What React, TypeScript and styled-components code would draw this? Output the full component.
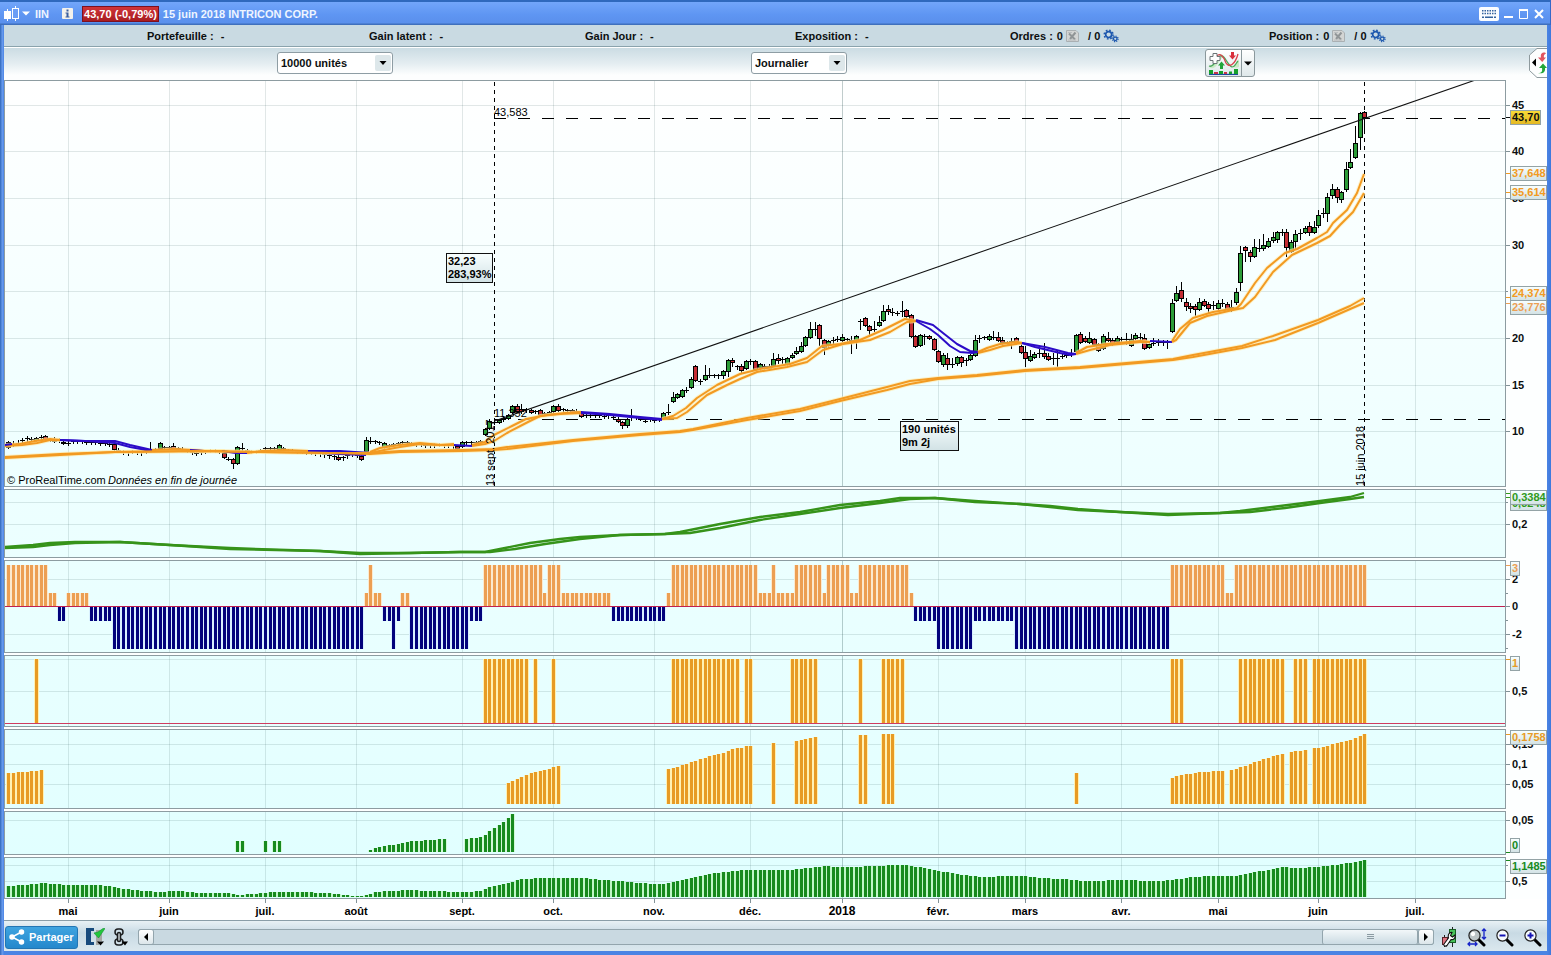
import React from "react";
import styled, { createGlobalStyle } from "styled-components";

const GlobalStyle = createGlobalStyle`
  *, *::before, *::after { box-sizing: border-box; }
  body { margin: 0; background: #4a84e4; }
  body, button, select { font: bold 11px/14px "Liberation Sans", Arial, sans-serif; color: #0c0f10; }
  svg { display: block; }
`;

/* ---------- window frame ---------- */

const Window = styled.main`
  display: flex;
  flex-direction: column;
  min-height: 100vh;
  min-width: 1100px;
  padding: 0 4px 4px;
  background: linear-gradient(to right, #3c72c4 0 1px, #6d9ff0 2px, #4a84e4 4px, #4a84e4 calc(100% - 4px), #3f78dc 100%);
`;

const TitleBar = styled.header`
  display: flex;
  align-items: center;
  height: 25px;
  flex: none;
  margin: 0 -4px;
  padding: 2px 3px 0 3px;
  color: #eef5ff;
  background: linear-gradient(#2f69bd 0 2px, #72a6fa 2px, #5e95f2 60%, #5a90ec 23px, #3f70bd 24px);
  border-right: 1px solid #3568c8;
`;

const Symbol = styled.h1`
  margin: 0 12px 0 3px;
  font-size: 11px;
  line-height: 14px;
`;

const Quote = styled.span`
  margin: 0 4px 0 9px;
  padding: 0 1px;
  line-height: 14px;
  border: 1px solid #7c1020;
  background: linear-gradient(#d03438, #a81c20);
  color: #fff;
`;

const Spacer = styled.div`
  flex: 1;
`;

const IconButton = styled.button<{ $w?: number; $h?: number }>`
  display: flex;
  align-items: center;
  justify-content: center;
  flex: none;
  width: ${(p) => p.$w ?? 16}px;
  height: ${(p) => p.$h ?? 20}px;
  padding: 0;
  border: 0;
  background: none;
  color: inherit;
`;

const StatusBar = styled.section`
  display: grid;
  grid-template-columns: 143fr 222fr 216fr 210fr 215fr 259fr 278fr;
  align-items: center;
  height: 22px;
  flex: none;
  background: #c9dae2;
  border-bottom: 1px solid #8aa3ac;
`;

const StatusItem = styled.div`
  display: flex;
  align-items: center;
  gap: 3px;
  white-space: pre;
`;

const StatusLabel = styled.span`
  margin-right: 4px;
`;

const Toolbar = styled.section`
  display: grid;
  grid-template-columns: 273fr 474fr 454fr 324fr 18px;
  align-items: center;
  height: 33px;
  flex: none;
  padding-bottom: 1px;
  background: linear-gradient(#fff 0 1px, #cbdce3 1px, #e4edf1 50%, #fdfefe 85%);
`;

const SelectBox = styled.label<{ $w: number }>`
  display: flex;
  position: relative;
  width: ${(p) => p.$w}px;
  height: 22px;

  select {
    width: 100%;
    padding: 0 22px 0 3px;
    appearance: none;
    border: 1px solid #8e9da4;
    border-radius: 3px;
    background: #fff;
  }
  svg {
    position: absolute;
    right: 2px;
    top: 3px;
    pointer-events: none;
  }
`;

const SplitButton = styled.div`
  display: flex;
  width: 50px;
  height: 28px;
  border: 1px solid #8b989c;
  border-radius: 3px;
  background: linear-gradient(#fff, #dfe8ea);
  button + button { border-left: 1px solid #8b989c; }
`;

/* ---------- charts ---------- */

const Charts = styled.section`
  display: flex;
  flex-direction: column;
  gap: 2px;
  background: #fdffff;
`;

const PanelRow = styled.div`
  display: flex;
`;

const Plot = styled.div<{ $h: number; $from: string; $to: string }>`
  display: grid;
  flex: 1;
  min-width: 0;
  height: ${(p) => p.$h}px;
  border: 1px solid #8d9ca1;
  background: linear-gradient(${(p) => p.$from}, ${(p) => p.$to});
  > svg { grid-area: 1 / 1; width: 100%; height: 100%; }
`;

const Axis = styled.svg`
  flex: none;
  overflow: visible;
  font-weight: bold;
`;

const TimeAxis = styled.div`
  display: flex;
  flex: 1 0 auto;
  height: 22px;
  padding: 0 42px 0 1px;
  background: #fff;
  border-bottom: 1px solid #8a9ea8;
  svg { width: 100%; height: 21px; overflow: visible; }
`;

/* ---------- footer ---------- */

const Footer = styled.footer`
  display: flex;
  align-items: center;
  flex: none;
  height: 30px;
  padding: 2px 2px 0 1px;
  background: linear-gradient(#e8f1f5, #c8dae4 40%, #dbe8ee);
`;

const ShareButton = styled.button`
  display: flex;
  align-items: center;
  gap: 4px;
  height: 23px;
  width: 73px;
  margin: 0 7px 0 0;
  padding: 0 2px 0 3px;
  border: 1px solid #2276b4;
  border-radius: 3px;
  background: linear-gradient(#3fa4e0, #2488cc);
  color: #fff;
`;

const ScrollBar = styled.div`
  display: flex;
  flex: 1;
  height: 16px;
  margin: 0 3px 0 1px;
  border: 1px solid #93a5ad;
  border-radius: 3px;
  background: #c9d9e1;
`;

const ScrollArrow = styled(IconButton)`
  width: 14px;
  height: 14px;
  border-radius: 2px;
  background: linear-gradient(#fff, #dce6ea);
  box-shadow: 0 0 0 1px #93a5ad;
`;

const ScrollThumb = styled.div`
  display: flex;
  align-items: center;
  justify-content: center;
  width: 94px;
  margin-right: 2px;
  border-radius: 2px;
  background: linear-gradient(#f2f7f9, #cbdbe3);
  box-shadow: 0 0 0 1px #93a5ad;
`;

const Tools = styled.div`
  display: flex;
  gap: 4px;
`;

/* ---------- data ---------- */

const GREEN = "#178a1e";
const ORANGE = "#e79b25";
const SAND = "#ec9f53";
const NAVY = "#02027c";
const MA = "#f29a22";
const BLUE = "#2c0cc8";

const PLOT_X = 5;
const PLOT_W = 1500;
const barLeft = (i: number) => Math.floor(7.95 + i * 4.58);
const pct = (x: number) => `${((x - PLOT_X) / PLOT_W) * 100}%`;

const months: [number, string][] = [
  [68, "mai"], [169, "juin"], [265, "juil."], [356, "août"], [462, "sept."], [553, "oct."], [654, "nov."], [750, "déc."],
  [842, "2018"], [938, "févr."], [1025, "mars"], [1121, "avr."], [1218, "mai"], [1318, "juin"], [1415, "juil."],
];

type Bar = { i: number; top: number; bottom: number; fill: string };

/* runs of equal score: first bar, last bar, score */
const scoreRuns = [
  [0, 8, 3], [9, 10, 1], [11, 12, -1], [13, 17, 1], [18, 22, -1], [23, 77, -3], [78, 78, 1], [79, 79, 3], [80, 81, 1], [82, 83, -1],
  [84, 84, -3], [85, 85, -1], [86, 87, 1], [88, 100, -3], [101, 103, -1], [104, 116, 3], [117, 117, 1], [118, 120, 3], [121, 131, 1],
  [132, 143, -1], [144, 144, 1], [145, 163, 3], [164, 166, 1], [167, 167, 3], [168, 171, 1], [172, 177, 3], [178, 178, 1], [179, 183, 3],
  [184, 185, 1], [186, 196, 3], [197, 197, 1], [198, 202, -1], [203, 210, -3], [211, 219, -1], [220, 253, -3], [254, 265, 3],
  [266, 267, 1], [268, 296, 3],
];
const scoreBars: Bar[] = scoreRuns.flatMap(([a, b, v]) =>
  Array.from({ length: b - a + 1 }, (_, k) =>
    v > 0 ? { i: a + k, top: 607 - v * 14, bottom: 606, fill: SAND } : { i: a + k, top: 607, bottom: 607 - v * 14, fill: NAVY }
  )
);

const signalRuns = [
  [6, 6], [104, 113], [115, 115], [119, 119], [145, 159], [161, 162], [171, 176], [186, 186], [191, 195], [254, 256], [269, 278],
  [281, 283], [285, 296],
];
const signalBars: Bar[] = signalRuns.flatMap(([a, b]) =>
  Array.from({ length: b - a + 1 }, (_, k) => ({ i: a + k, top: 659, bottom: 723, fill: ORANGE }))
);

const series = (start: number, tops: number[], bottom: number, fill: string): Bar[] =>
  tops.map((top, k) => ({ i: start + k, top, bottom, fill }));

const slopeBars: Bar[] = [
  ...series(0, [773, 773, 772, 772, 772, 771, 771, 770], 804, ORANGE),
  ...series(109, [783, 781, 779, 777, 775, 773, 772, 771, 770, 769, 767, 766], 804, ORANGE),
  ...series(144, [769, 768, 767, 765, 764, 762, 761, 759, 758, 756, 755, 754, 753, 751, 749, 748, 748, 746, 746], 804, ORANGE),
  ...series(167, [743], 804, ORANGE),
  ...series(172, [741, 740, 739, 738, 737], 804, ORANGE),
  ...series(186, [735, 735], 804, ORANGE),
  ...series(191, [734, 734, 734], 804, ORANGE),
  ...series(233, [773], 804, ORANGE),
  ...series(254, [778, 776, 775, 774, 774, 773, 772, 772, 772, 771, 771, 771], 804, ORANGE),
  ...series(267, [770, 769, 767, 766, 764, 762, 761, 759, 758, 756, 755, 754], 804, ORANGE),
  ...series(280, [752, 751, 751, 750], 804, ORANGE),
  ...series(285, [748, 748, 747, 746, 744, 743, 742, 741, 740, 738, 736, 734], 804, ORANGE),
];

const baseBars: Bar[] = [
  ...series(50, [841, 841], 852, GREEN),
  ...series(56, [841], 852, GREEN),
  ...series(58, [841, 841], 852, GREEN),
  ...series(79, [850, 848, 847, 846, 845, 845, 844, 843, 842, 841, 841, 841, 840, 840, 840, 839, 839], 852, GREEN),
  ...series(100, [839, 838, 838, 837, 835, 831, 828, 825, 822, 818, 814], 852, GREEN),
];

/* slow oscillator: bar index, top of the bar; tops between are interpolated */
const volKeys = [
  [0, 886], [3, 885], [5, 884], [8, 883], [10, 884], [13, 885], [19, 885], [22, 886], [24, 888], [27, 890], [30, 891], [33, 892],
  [36, 891], [38, 891], [42, 893], [48, 893], [50, 895], [53, 894], [58, 892], [64, 892], [70, 893], [74, 895], [76, 896], [78, 895],
  [80, 892], [83, 891], [88, 890], [92, 891], [100, 892], [103, 891], [105, 887], [109, 883], [112, 879], [116, 878], [126, 878],
  [130, 880], [134, 881], [137, 883], [142, 884], [144, 883], [148, 879], [154, 873], [160, 870], [170, 870], [175, 868], [178, 866],
  [182, 867], [190, 866], [193, 865], [196, 865], [201, 869], [207, 874], [212, 877], [218, 876], [222, 876], [226, 878], [233, 880],
  [235, 881], [243, 880], [250, 881], [254, 880], [258, 877], [262, 876], [268, 876], [272, 872], [276, 869], [278, 867], [281, 868],
  [285, 867], [290, 865], [296, 860],
];
const volBars: Bar[] = Array.from({ length: 297 }, (_, i) => {
  const k = Math.max(1, volKeys.findIndex(([n]) => n >= i));
  const [x0, y0] = volKeys[k - 1];
  const [x1, y1] = volKeys[k];
  return { i, top: Math.round(y0 + ((y1 - y0) * (i - x0)) / (x1 - x0)), bottom: 897, fill: GREEN };
});

/* candles: first bar of the run, then "body top, body bottom, high, low, colour" for each bar */
const candleRuns: [number, string][] = [
  [0, "442 447 441 448 g|444 445 441 446 k|443 444 440 445 k|440 441 438 443 k|438 439 436 441 k|439 440 437 440 k|438 440 437 441 g|437 438 435 440 k|436 439 435 440 r|439 440 438 441 k|439 441 437 442 r|440 441 438 442 k|442 443 441 444 g|443 444 441 445 k|441 442 440 443 k|441 442 440 443 k|441 442 440 443 k|442 443 441 444 k|442 443 440 444 k|442 443 441 444 k|443 444 441 445 k|443 444 442 445 k|444 445 442 446 k"],
  [23, "444 449 443 450 r|450 451 448 452 k|452 453 450 454 k|452 453 451 455 k|451 452 450 453 k|452 453 451 454 k|452 453 451 455 k|450 451 449 453 k|449 450 442 451 k|449 450 448 451 k|443 448 442 449 g|447 448 446 449 k|447 448 446 449 k|446 448 443 449 r|448 449 447 450 k|449 450 447 451 k|450 451 449 452 k|452 453 450 454 k|453 454 451 455 k|452 453 450 454 k|451 452 450 453 k|450 451 449 452 k|450 451 449 452 k|451 452 450 453 k|453 457 452 458 r|459 460 457 460 k|459 463 458 468 r|447 463 446 464 g|448 449 443 450 k|450 451 449 452 k|451 452 450 453 k|451 452 450 453 k|450 451 449 452 k|448 449 447 450 k|448 449 447 450 k|448 449 447 450 k|445 449 444 450 g|448 449 447 450 k"],
  [61, "450 451 449 452 k|450 451 449 452 k|451 452 450 453 k|451 452 450 453 k|452 453 450 454 k|452 453 450 454 k|452 453 451 455 k|453 454 451 456 k|454 455 453 457 k|455 456 454 458 k|456 458 455 459 k|457 459 455 460 r|457 458 456 460 k|455 456 454 458 k|453 454 452 456 k|455 456 454 457 k|456 459 455 460 r|440 451 437 452 g|441 442 437 443 k|441 442 440 443 k|442 443 441 444 k|443 447 442 448 g|445 446 444 447 k|444 445 443 446 k|443 444 442 445 k|442 443 441 444 k|442 443 441 444 k|443 444 442 445 k|444 445 443 446 k|444 445 443 446 k|445 446 444 447 k|445 446 443 447 k|445 446 443 447 k|444 445 443 446 k|445 446 444 447 k|445 446 444 447 k|445 446 444 448 k|446 448 445 449 r|442 446 441 447 g|442 443 441 445 k|442 443 441 444 k|442 443 441 444 k|441 442 440 443 k"],
  [104, "429 434 428 435 g|421 428 419 429 g|422 423 420 424 k|420 422 419 423 g|418 420 416 421 k|415 418 414 419 g|406 412 405 413 g|406 411 404 412 r|409 411 404 413 r|409 411 408 412 k|410 412 409 413 r|411 412 410 413 k|410 414 409 415 r|413 414 412 415 k|412 414 411 415 g|406 411 405 412 g|406 410 404 411 r|409 410 408 412 k|410 411 409 412 k|410 412 409 413 r|411 412 409 413 k|412 416 411 417 r|415 416 413 417 k|415 416 413 417 k|415 416 414 417 k|415 416 414 417 k|416 417 415 418 k|415 416 413 418 k|417 418 416 419 k|419 421 417 422 r|422 425 421 428 r|419 425 418 427 g|417 418 409 420 k|417 418 416 419 k|418 419 417 420 k|421 422 420 422 k|419 420 417 421 k|420 421 418 422 k|419 420 418 421 k|413 417 412 418 g|412 413 404 414 k|397 401 392 402 g|394 397 393 398 g|390 396 389 397 g|390 391 387 392 k|379 387 377 388 g|366 380 365 381 r|381 382 379 384 k|375 379 365 380 g|375 376 368 377 k|375 376 374 377 k|375 376 374 378 k|371 375 370 378 g|360 371 359 376 g|360 362 358 366 r|366 367 365 369 k|366 370 364 373 r|361 368 360 369 g"],
  [162, "361 362 359 364 k|361 369 360 370 r|364 367 363 370 g|366 368 364 369 r|366 368 364 369 g|359 365 353 366 g|358 360 354 363 r|359 360 357 363 k|358 364 357 365 g|355 357 353 358 g|351 353 347 354 g|346 351 342 352 g|337 345 336 346 g|329 337 322 338 g|329 330 322 335 k|325 338 324 345 r|340 347 339 354 r|341 344 340 348 g|340 341 337 343 k|339 340 336 341 k|337 340 334 341 g|339 340 338 341 k|340 341 336 353 k|336 341 335 348 g|321 322 319 329 k|318 325 317 326 r|326 330 325 336 r|329 330 321 331 k|322 325 316 326 g|311 320 305 321 g|309 311 305 314 r|312 313 308 315 k|313 314 311 315 k|311 312 301 316 k|310 316 309 317 r|315 336 314 337 r|336 346 335 347 r|335 345 334 346 g|336 337 334 344 k|336 338 335 339 r|339 349 338 350 r|351 361 350 362 r|355 364 353 366 g|358 364 353 369 r|364 365 358 367 k|357 363 356 365 g|357 362 356 366 r|360 361 358 365 k|355 359 354 360 g|340 355 335 356 g|338 339 335 342 k|337 338 336 339 k|336 339 334 340 g|337 338 331 339 k|337 340 332 341 r|340 342 337 345 r|342 343 341 345 k|341 342 338 348 k|338 343 337 344 r|346 352 344 353 r|352 358 346 366 r|356 360 350 361 g|354 357 352 358 g|353 354 349 357 k|353 356 343 358 r|356 359 353 360 r|358 359 353 364 k|358 359 350 366 k"],
  [230, "356 357 354 358 k|355 356 353 357 k|354 355 349 356 k|335 351 334 352 g|334 342 332 343 r|338 341 336 342 r|338 342 332 343 g|339 344 338 345 r|344 350 343 351 r|336 348 334 349 g|338 340 332 341 r|340 344 338 345 r|338 341 336 342 g|339 340 337 341 k|339 340 333 344 k|339 345 334 346 g|335 338 333 339 g|337 338 333 340 k|338 348 334 349 r|344 347 341 348 g|343 344 338 345 k|342 343 339 345 k|342 343 340 345 k|342 343 340 348 k|303 331 299 332 g|293 300 286 301 g|290 298 282 301 r|302 306 298 310 r|306 308 303 312 r|306 309 304 315 r|302 309 298 310 g|301 305 299 306 r|304 308 302 313 r|305 306 301 309 k|303 308 300 309 g|303 304 299 306 k|304 309 302 311 r|307 308 300 311 k|292 302 288 304 g|253 282 246 290 g|247 250 246 261 r|252 256 250 261 r|247 256 239 257 g|248 249 239 251 k|245 248 234 250 g|241 246 238 247 g|237 240 232 242 g|232 239 231 242 g|232 233 229 235 k|232 247 229 256 r|242 251 240 252 g|234 241 230 248 g|233 234 229 239 k|228 232 226 233 g|226 232 222 235 r|227 232 221 233 g|215 225 210 227 g|213 214 208 217 k|197 213 193 221 g|189 195 184 198 g|189 197 187 202 r|192 199 191 202 g|169 189 162 191 g|162 167 149 168 g|143 157 126 158 g|113 137 112 149 g|112 117 111 133 r"],
];
const candles = candleRuns.flatMap(([start, text]) =>
  text.split("|").map((c, k) => {
    const [top, bottom, high, low, kind] = c.split(" ");
    return { i: start + k, top: +top, bottom: +bottom, high: +high, low: +low, kind };
  })
);
const candleFill: Record<string, string> = { g: "#2c9c38", r: "#c42c34", k: "#000" };

const averages: [string, string][] = [
  [MA, "5,445 20,444 35,441 50,439 60,440"],
  [MA, "5,446 22,445 37,443 50,440 60,440"],
  [BLUE, "5,445 12,444"],
  [BLUE, "60,440 85,441 115,441 130,445 152,450"],
  [BLUE, "60,440 85,441 115,443 130,447 152,451"],
  [MA, "152,450 175,449 192,450 205,451 225,451"],
  [BLUE, "190,450 204,451"],
  [BLUE, "222,451 236,453 247,453"],
  [MA, "247,453 262,451 285,450 308,451"],
  [BLUE, "308,451 340,451 370,453"],
  [BLUE, "308,452 340,454 366,455"],
  [MA, "370,452 380,448 400,445 420,443 440,445 454,444"],
  [MA, "370,453 384,450 400,447 420,444 440,445 454,445"],
  [BLUE, "454,445 472,446"],
  [MA, "472,445 485,442 494,435 512,426 526,419 547,415 565,413 581,412"],
  [MA, "472,446 485,444 494,441 507,433 528,422 540,416 560,414 581,413"],
  [BLUE, "581,412 610,414 640,417 662,419"],
  [BLUE, "581,413 610,415 640,418 662,420"],
  [MA, "662,419 673,416 686,408 697,398 717,385 740,374 760,369 790,364 807,358 822,346 840,344 860,340 883,330 905,319 916,321"],
  [MA, "662,419 677,418 687,412 707,395 727,385 740,379 757,372 787,367 807,362 823,350 843,344 870,340 890,332 907,322 916,321"],
  [BLUE, "916,320 933,325 943,333 957,344 970,351 978,352"],
  [BLUE, "916,321 930,329 938,335 950,346 960,352 972,353 978,352"],
  [MA, "978,352 987,348 1000,344 1017,342 1022,343"],
  [MA, "978,353 990,350 1003,346 1022,343"],
  [BLUE, "1022,343 1035,347 1060,353 1070,355 1076,354"],
  [BLUE, "1022,343 1045,347 1068,353 1076,354"],
  [MA, "1076,353 1087,347 1107,344 1140,341 1150,342"],
  [MA, "1076,354 1090,350 1110,345 1140,342 1150,342"],
  [BLUE, "1150,341 1172,342"],
  [MA, "1172,341 1180,329 1193,318 1213,312 1237,308 1241,304 1255,283 1267,268 1285,253 1297,249 1317,238 1327,232 1333,223 1347,210 1357,193 1364,174"],
  [MA, "1172,342 1176,340 1190,323 1207,316 1233,310 1243,308 1255,297 1273,272 1292,255 1317,243 1330,236 1340,225 1353,212 1364,193"],
  [MA, "5,457 60,454 115,452 200,451 260,452 330,453 370,453 400,451 462,450 494,449 507,447 573,440 640,434 680,431 693,429 747,418 800,409 840,399 887,387 910,381 938,378 977,375 1025,370 1080,367 1173,359 1193,355 1242,346 1273,336 1318,320 1350,306 1364,298"],
  [MA, "5,458 60,455 115,452 200,451 260,452 330,453 370,454 400,452 462,451 494,450 507,449 573,441 640,435 680,432 693,430 747,420 800,411 840,401 887,390 910,384 938,379 977,376 1025,371 1080,368 1173,360 1193,357 1242,348 1275,340 1318,323 1364,303"],
];

const trendLines = [
  "5,547 33,545 50,543 75,542 120,542 170,545 230,548 320,551 360,554 410,553 460,552 485,552 500,549 530,543 560,539 580,537 620,535 665,534 680,532 720,524 760,517 800,512 840,505 880,501 900,498 935,498 975,502 1020,504 1050,506 1078,509 1120,512 1168,515 1220,513 1240,511 1280,506 1320,501 1350,497 1364,493",
  "5,548 33,547 50,545 75,543 120,542 170,545 230,549 320,551 360,553 410,553 460,552 490,552 515,549 545,544 580,539 620,535 665,534 690,533 720,528 760,520 800,514 840,508 880,503 910,499 935,498 975,501 1020,504 1050,507 1078,510 1120,512 1168,514 1220,513 1250,512 1285,508 1320,503 1350,499 1364,497",
];

/* ---------- chart parts ---------- */

const Bars = ({ bars, halo }: { bars: Bar[]; halo: (b: Bar) => string }) => (
  <g shapeRendering="crispEdges">
    {bars.map((b) => <rect key={`h${b.i}`} x={barLeft(b.i) - 1} y={b.top} width={5} height={b.bottom - b.top} fill={halo(b)} />)}
    {bars.map((b) => <rect key={b.i} x={barLeft(b.i)} y={b.top} width={3} height={b.bottom - b.top} fill={b.fill} />)}
  </g>
);

const ZeroLine = ({ y, color }: { y: number; color: string }) => (
  <rect x={PLOT_X} y={y} width={PLOT_W} height={1} fill={color} shapeRendering="crispEdges" />
);

type Tick = { y: number; label?: string };
type Badge = { y: number; label: string; color: string; tick?: number; gold?: boolean };

type PanelProps = {
  y: number;
  h: number;
  from: string;
  to: string;
  grid: number[];
  ticks: Tick[];
  badges: Badge[];
  children: React.ReactNode;
  overlay?: React.ReactNode;
};

const Panel = ({ y, h, from, to, grid, ticks, badges, children, overlay }: PanelProps) => (
  <PanelRow>
    <Plot $h={h} $from={from} $to={to}>
      <svg viewBox={`${PLOT_X} ${y + 1} ${PLOT_W} ${h - 2}`} preserveAspectRatio="none">
        <g shapeRendering="crispEdges" fill="#204848">
          {grid.map((g) => <rect key={g} x={PLOT_X} y={g} width={PLOT_W} height={1} fillOpacity={0.13} />)}
          {months.map(([x]) => <rect key={x} x={x} y={y} width={1} height={h} fillOpacity={x === 842 ? 0.28 : 0.13} />)}
        </g>
        {children}
      </svg>
      {overlay && <svg>{overlay}</svg>}
    </Plot>
    <Axis width={41} height={h} viewBox={`1506 ${y} 41 ${h}`}>
      {ticks.map((t) => (
        <g key={t.y}>
          <rect x={1506} y={t.y} width={t.label ? 4 : 2} height={1} fill="#829297" />
          {t.label && <text x={1512} y={t.y + 4} fill="#0c0f10">{t.label}</text>}
        </g>
      ))}
      {badges.map((b) => {
        const w = b.label.length === 1 ? 9 : b.gold ? 30 : 36;
        return (
          <g key={b.label}>
            {b.tick && <rect x={1506} y={b.tick} width={4} height={1} fill={b.color} />}
            <rect x={1510.5} y={b.y + 0.5} width={w} height={14} fill={b.gold ? "url(#gold)" : "url(#glass)"} stroke="#93a3a6" />
            <text x={1512} y={b.y + 11} fill={b.color}>{b.label}</text>
          </g>
        );
      })}
    </Axis>
  </PanelRow>
);

const Note = ({ x, y, w, lines }: { x: number; y: number; w: number; lines: string[] }) => (
  <svg x={pct(x)} y={y - 81} overflow="visible" fontWeight="bold">
    <rect x={0.5} y={0.5} width={w} height={29} fill="url(#glass)" stroke="#111" />
    {lines.map((l, k) => <text key={l} x={2} y={12 + k * 13}>{l}</text>)}
  </svg>
);

/* ---------- icons ---------- */

const Caret = ({ color = "#000" }: { color?: string }) => (
  <svg width="8" height="5" viewBox="0 0 8 5"><path d="M0 0.5h8L4 4.5z" fill={color} /></svg>
);

const CandlesIcon = () => (
  <svg width="17" height="16" viewBox="0 0 17 16">
    <path d="M4.5 3v12M12.5 0v15" stroke="#fff" />
    <rect x="1" y="5" width="7" height="8" fill="#fff" />
    <rect x="9.5" y="2.5" width="6" height="10" fill="#6a9df5" stroke="#fff" />
  </svg>
);

const InfoIcon = () => (
  <svg width="11" height="11" viewBox="0 0 11 11">
    <rect width="11" height="11" rx="1" fill="#f4f2ec" />
    <path d="M4.5 1.5h2v2h-2zM3.5 4.5h3v4h1v1h-4v-1h1v-3h-1z" fill="#3a5f9e" />
  </svg>
);

const CancelOrderIcon = () => (
  <svg width="13" height="12" viewBox="0 0 13 12">
    <path d="M.5.5h9.500l2.500 2.500v8.500H.5z" fill="#d3d5d4" stroke="#aab0b3" />
    <path d="M3 3.500l6 6M9.500 2.500L4 9" stroke="#909597" strokeWidth="2" />
    <path d="M2 2.500h4M2 10h8" stroke="#b9bdbf" />
  </svg>
);

const GearsIcon = () => (
  <svg width="17" height="14" viewBox="0 0 17 14" fill="none" stroke="#1d58ae">
    <circle cx="6" cy="5.5" r="3.2" strokeWidth="1.8" />
    <circle cx="6" cy="5.5" r="4.7" strokeWidth="1.6" strokeDasharray="1.8 1.89" />
    <circle cx="13" cy="10" r="1.9" strokeWidth="1.4" />
    <circle cx="13" cy="10" r="3" strokeWidth="1.3" strokeDasharray="1.2 1.15" />
  </svg>
);

const KeyboardIcon = () => (
  <svg width="20" height="14" viewBox="0 0 20 14">
    <rect width="20" height="14" rx="2" fill="#fbfdff" />
    <path d="M3 3.8h14M3 6.5h14" stroke="#35639e" strokeWidth="1.6" strokeDasharray="1.5 1" />
    <path d="M3 10.2h2M6 10.2h8M15 10.2h2" stroke="#35639e" strokeWidth="1.4" />
  </svg>
);

const IndicatorIcon = () => (
  <svg width="31" height="24" viewBox="0 0 31 24">
    <path d="M1 15C6 18 8 8 12 4c5-3 7 10 12 11 3 0 4-4 7-7v8c-5 2-8-1-11-5-4-6-6-5-9 0-3 5-6 8-10 5z" fill="#c9ecc4" />
    <path d="M1 15c5 2 7-7 11-10 5-2 7 9 12 11 3 0 4-4 6-6" fill="none" stroke="#4aa65a" strokeWidth="1.2" />
    <path d="M9 5c3-4 7 1 9 7 3 5 9 2 12-9" fill="none" stroke="#d8404a" strokeWidth="1.3" />
    <path d="M5 2.5h4v3h3v4H9v3H5v-3H2v-4h3z" fill="#fff" stroke="#6c7577" />
    <path d="M12 18v-3.500h-2l3.500-4 3.500 4h-2V18z" fill="#22a53a" />
    <path d="M23 1h3v3.500h2L24.500 8.500 21 4.500h2z" fill="#d92f3c" />
    <path d="M1 23.500h29" stroke="#1c4b9c" strokeWidth="1.4" />
    <path d="M1 19h4v4H1zM11 20h4v3h-4zM21 20.500h3v2.500h-3zM26 18h4v5h-4z" fill="#16a02c" />
    <path d="M6 21h4v2H6zM16 21h3v2h-3z" fill="#c8324a" />
  </svg>
);

const OrderTabIcon = () => (
  <svg width="18" height="30" viewBox="0 0 18 30">
    <path d="M18 .5H8L.5 7v15.500L8 29.500h10" fill="#fdfefe" stroke="#8e9a9e" />
    <path d="M7 10.500v8L3 14.500z" fill="#000" />
    <path d="M16 4.500c-4 0-4.500 2-4 5H9l4.200 4.500L17 9.500h-2c-.5-2 0-3 2-4z" fill="#e25560" />
    <path d="M9 25c4 0 4.500-2 4-5h-3l4-4.500 4 4.500h-2c.5 4-1.500 6-7 5z" fill="#23a63a" />
  </svg>
);

const ShareIcon = () => (
  <svg width="16" height="16" viewBox="0 0 16 16" fill="#fff" stroke="#fff" strokeWidth="1.500">
    <path d="M12.500 3L3 8l9.500 5" fill="none" />
    <circle cx="12.500" cy="3" r="2" />
    <circle cx="3" cy="8" r="2" />
    <circle cx="12.500" cy="13" r="2" />
  </svg>
);

const ValidateIcon = () => (
  <svg width="20" height="18" viewBox="0 0 20 18">
    <path d="M1 0h8v3H6v11h3v3H1z" fill="#174a7c" />
    <path d="M11 2h6v11h-3v4h-3z" fill="#a6a7a4" />
    <path d="M9 5l4-1 5-3.500h2L13.500 10z" fill="#22c83c" stroke="#169030" strokeWidth=".6" />
    <path d="M12 13.500h7l-3.500 4z" fill="#000" />
  </svg>
);

const ChainIcon = () => (
  <svg width="14" height="18" viewBox="0 0 14 18" fill="none" stroke="#1b1e20" strokeWidth="1.500">
    <rect x="1" y="1" width="8" height="6" rx="3" />
    <rect x="1" y="11" width="8" height="6" rx="3" />
    <rect x="3.500" y="4.500" width="3" height="9" rx="1.500" fill="#c7cfd2" />
    <path d="M7.500 13.500h6.500l-3 4z" fill="#000" stroke="none" />
  </svg>
);

const WrenchIcon = () => (
  <svg width="17" height="20" viewBox="0 0 17 20">
    <path d="M3.500 8v12M11.500 0v20" stroke="#222" />
    <rect x="1.500" y="10.500" width="5" height="7" fill="#dd7480" stroke="#5a2228" />
    <rect x="8.500" y="2.500" width="6" height="13" fill="#48c35a" stroke="#175c22" />
    <path d="M3 17l4.500-6C6.500 7.500 8.500 5 11 5.500L9.500 8.500l2 1.500 2.500-2c.8 3-1.500 5-4 4.500L6 18.500c-1.500 1.500-4 0-3-1.500z" fill="#fff" stroke="#111" strokeWidth="1.100" />
  </svg>
);

const ZoomIcon = ({ kind }: { kind: "in" | "out" | "fit" }) => (
  <svg width="20" height="19" viewBox="0 0 20 19">
    <path d="M11 11l6 6" stroke="#000" strokeWidth="3" strokeLinecap="round" />
    <circle cx="7.500" cy="7.500" r="5.600" fill={kind === "fit" ? "#bcc4c6" : "#f6fbfd"} stroke="#222" strokeWidth="1.200" />
    {kind === "fit" ? (
      <g fill="none" stroke="#1522c8" strokeWidth="1.300">
        <circle cx="6" cy="6" r="1.500" fill="#fff" stroke="#fff" />
        <path d="M17 1v10M15 3l2-2 2 2M15 9l2 2 2-2M1 16h9M3 14l-2 2 2 2M8 14l2 2-2 2" />
      </g>
    ) : (
      <path d={kind === "in" ? "M4.500 7.500h6M7.500 4.500v6" : "M4.500 7.500h6"} stroke="#1414b4" strokeWidth="2" />
    )}
  </svg>
);

/* ---------- page ---------- */

const Combo = ({ label, value, w }: { label: string; value: string; w: number }) => (
  <SelectBox $w={w}>
    <select aria-label={label} defaultValue={value}><option>{value}</option></select>
    <svg width="16" height="16" viewBox="0 0 16 16">
      <rect width="16" height="16" rx="2" fill="#dde7ea" />
      <path d="M4.500 6h7L8 10z" fill="#000" />
    </svg>
  </SelectBox>
);

const Status = ({ label, value }: { label: string; value: string }) => (
  <StatusItem><StatusLabel>{label} :</StatusLabel>{value}</StatusItem>
);

const OrderStatus = ({ label, cancel, settings }: { label: string; cancel: string; settings: string }) => (
  <StatusItem>
    <span><StatusLabel>{label} :</StatusLabel>0</span>
    <IconButton $w={13} aria-label={cancel}><CancelOrderIcon /></IconButton>
    <span>{"  / 0"}</span>
    <IconButton aria-label={settings}><GearsIcon /></IconButton>
  </StatusItem>
);

const priceOverlay = (
  <>
    <svg x={pct(7)} y={403} overflow="visible" fontWeight="normal">
      <text>© ProRealTime.com</text>
      <text x={101} fontStyle="italic">Données en fin de journée</text>
    </svg>
    <svg x={pct(494)} overflow="visible" fontWeight="normal">
      <text x={0} y={35}>43,583</text>
      <text x={0} y={336}>11,352</text>
      <text transform="translate(0 405) rotate(-90)">13 sept. 2017</text>
    </svg>
    <svg x={pct(1364)} overflow="visible" fontWeight="normal">
      <text transform="translate(0 405) rotate(-90)">15 juin 2018</text>
    </svg>
    <Note x={446} y={253} w={46} lines={["32,23", "283,93%"]} />
    <Note x={900} y={421} w={58} lines={["190 unités", "9m 2j"]} />
  </>
);

export default function App() {
  return (
    <>
      <GlobalStyle />
      <Window>
        <TitleBar>
          <IconButton $w={17} aria-label="Type de graphique"><CandlesIcon /></IconButton>
          <IconButton $w={12} aria-label="Menu du graphique"><Caret color="#fff" /></IconButton>
          <Symbol>IIN</Symbol>
          <IconButton $w={12} aria-label="Informations"><InfoIcon /></IconButton>
          <Quote>43,70 (-0,79%)</Quote>
          <span>15 juin 2018 INTRICON CORP.</span>
          <Spacer />
          <IconButton $w={24} aria-label="Clavier"><KeyboardIcon /></IconButton>
          <IconButton aria-label="Réduire">
            <svg width="10" height="10"><rect y="7" width="9" height="2" fill="#fff" /></svg>
          </IconButton>
          <IconButton $w={14} aria-label="Agrandir">
            <svg width="10" height="10"><path d="M.5 1h8v8.500h-8z" fill="none" stroke="#fff" /><path d="M0 1h9" stroke="#fff" strokeWidth="2" /></svg>
          </IconButton>
          <IconButton aria-label="Fermer">
            <svg width="10" height="10"><path d="M1 1l8 8M9 1L1 9" stroke="#fff" strokeWidth="2" /></svg>
          </IconButton>
        </TitleBar>

        <StatusBar>
          <span />
          <Status label="Portefeuille" value="-" />
          <Status label="Gain latent" value="-" />
          <Status label="Gain Jour" value="-" />
          <Status label="Exposition" value="-" />
          <OrderStatus label="Ordres" cancel="Annuler les ordres" settings="Réglages des ordres" />
          <OrderStatus label="Position" cancel="Clôturer la position" settings="Réglages de la position" />
        </StatusBar>

        <Toolbar>
          <span />
          <Combo label="Nombre d'unités" value="10000 unités" w={116} />
          <Combo label="Unité de temps" value="Journalier" w={96} />
          <SplitButton>
            <IconButton $w={35} $h={26} aria-label="Ajouter un indicateur"><IndicatorIcon /></IconButton>
            <IconButton $w={13} $h={26} aria-label="Liste des indicateurs"><Caret /></IconButton>
          </SplitButton>
          <IconButton $w={18} $h={30} aria-label="Ouvrir le carnet d'ordres"><OrderTabIcon /></IconButton>
        </Toolbar>

        <Charts>
          <Panel
            y={80} h={407} from="#ffffff" to="#edffff"
            grid={[105, 151, 198, 245, 291, 338, 385, 431]}
            ticks={[
              { y: 105, label: "45" }, { y: 151, label: "40" }, { y: 198, label: "35" }, { y: 245, label: "30" }, { y: 291 },
              { y: 338, label: "20" }, { y: 385, label: "15" }, { y: 431, label: "10" },
            ]}
            badges={[
              { y: 110, label: "43,70", color: "#0c0f10", tick: 117, gold: true },
              { y: 166, label: "37,648", color: MA, tick: 173 },
              { y: 185, label: "35,614", color: MA, tick: 192 },
              { y: 286, label: "24,374", color: MA, tick: 297 },
              { y: 300, label: "23,776", color: SAND, tick: 303 },
            ]}
            overlay={priceOverlay}
          >
            <defs>
              <linearGradient id="glass" x2="0" y2="1"><stop stopColor="#f8ffff" /><stop offset="1" stopColor="#d2e2e5" /></linearGradient>
              <linearGradient id="gold" x2="0" y2="1"><stop stopColor="#f9dc38" /><stop offset="1" stopColor="#e3b824" /></linearGradient>
            </defs>
            <g shapeRendering="crispEdges">
              <path d="M494 118.500H1505M494 419.500H1505" stroke="#000" strokeDasharray="12 12" fill="none" />
              <path d="M494.500 82V486M1364.500 82V486" stroke="#000" strokeDasharray="4 4" />
              {candles.map((c) => {
                const x = barLeft(c.i) + 1;
                return (
                  <g key={c.i}>
                    <rect x={x} y={c.high} width={1} height={c.low - c.high + 1} fill="#000" />
                    {c.kind === "k" ? (
                      <rect x={x - 2} y={c.top} width={5} height={1} fill="#000" />
                    ) : (
                      <rect x={x - 1.5} y={c.top + 0.5} width={4} height={c.bottom - c.top} fill={candleFill[c.kind]} stroke="#000" />
                    )}
                  </g>
                );
              })}
            </g>
            <path d="M494.500 421L1474 80.500" stroke="#111" strokeWidth="1.100" fill="none" />
            <g fill="none" strokeLinejoin="round">
              {averages.filter(([c]) => c === MA).map(([, p]) => <polyline key={p} points={p} stroke="#ffe9a8" strokeOpacity={0.6} strokeWidth={4} />)}
              {averages.map(([color, p]) => <polyline key={p} points={p} stroke={color} strokeWidth={2} />)}
            </g>
          </Panel>

          <Panel
            y={489} h={69} from="#edffff" to="#ebffff" grid={[502, 524]}
            ticks={[{ y: 502 }, { y: 524, label: "0,2" }]}
            badges={[
              { y: 496, label: "0,3248", color: "#2f9a1c", tick: 497 },
              { y: 490, label: "0,3384", color: "#2f9a1c", tick: 493 },
            ]}
          >
            <g fill="none" stroke="#36931a" strokeWidth={2.3} strokeLinejoin="round">
              {trendLines.map((p) => <polyline key={p} points={p} />)}
            </g>
          </Panel>

          <Panel
            y={560} h={93} from="#ebffff" to="#e8ffff" grid={[579, 634]}
            ticks={[{ y: 579, label: "2" }, { y: 593 }, { y: 606, label: "0" }, { y: 620 }, { y: 634, label: "-2" }, { y: 648 }]}
            badges={[{ y: 561, label: "3", color: SAND, tick: 565 }]}
          >
            <Bars bars={scoreBars} halo={(b) => (b.fill === NAVY ? "#d9f0ff" : "#fbead0")} />
            <ZeroLine y={606} color="#c02050" />
          </Panel>

          <Panel
            y={655} h={72} from="#e8ffff" to="#e6ffff" grid={[659, 691]}
            ticks={[{ y: 691, label: "0,5" }]}
            badges={[{ y: 656, label: "1", color: ORANGE, tick: 659 }]}
          >
            <Bars bars={signalBars} halo={() => "#fff1b4"} />
            <ZeroLine y={723} color="#d03c60" />
          </Panel>

          <Panel
            y={729} h={80} from="#e6ffff" to="#e3ffff" grid={[744, 764, 784]}
            ticks={[{ y: 744, label: "0,15" }, { y: 764, label: "0,1" }, { y: 784, label: "0,05" }]}
            badges={[{ y: 730, label: "0,1758", color: ORANGE, tick: 734 }]}
          >
            <Bars bars={slopeBars} halo={() => "#fff1b4"} />
          </Panel>

          <Panel
            y={811} h={44} from="#e3ffff" to="#e1ffff" grid={[820]}
            ticks={[{ y: 820, label: "0,05" }]}
            badges={[{ y: 838, label: "0", color: GREEN, tick: 852 }]}
          >
            <Bars bars={baseBars} halo={() => "#d2f8d8"} />
          </Panel>

          <Panel
            y={857} h={42} from="#e1ffff" to="#dfffff" grid={[865, 881]}
            ticks={[{ y: 865 }, { y: 881, label: "0,5" }]}
            badges={[{ y: 859, label: "1,1485", color: GREEN, tick: 860 }]}
          >
            <Bars bars={volBars} halo={() => "#c0f6c8"} />
          </Panel>
        </Charts>

        <TimeAxis>
          <svg>
            {months.map(([x, name]) => (
              <g key={x}>
                <rect x={pct(x)} width={1} height={4} fill="#829297" />
                <text x={pct(x)} y={16} textAnchor="middle" fontSize={x === 842 ? 12 : 11}>{name}</text>
              </g>
            ))}
          </svg>
        </TimeAxis>

        <Footer>
          <ShareButton><ShareIcon />Partager</ShareButton>
          <IconButton $w={20} aria-label="Valider"><ValidateIcon /></IconButton>
          <IconButton $w={32} aria-label="Lier les graphiques"><ChainIcon /></IconButton>
          <ScrollBar>
            <ScrollArrow aria-label="Défiler à gauche"><svg width="4" height="8"><path d="M4 0v8L0 4z" /></svg></ScrollArrow>
            <Spacer />
            <ScrollThumb>
              <svg width="7" height="6"><path d="M0 .5h7M0 2.500h7M0 4.500h7" stroke="#8b9ba3" /></svg>
            </ScrollThumb>
            <ScrollArrow aria-label="Défiler à droite"><svg width="4" height="8"><path d="M0 0v8l4-4z" /></svg></ScrollArrow>
          </ScrollBar>
          <Tools>
            <IconButton $w={24} aria-label="Réglages"><WrenchIcon /></IconButton>
            <IconButton $w={24} aria-label="Ajuster le zoom"><ZoomIcon kind="fit" /></IconButton>
            <IconButton $w={24} aria-label="Zoom arrière"><ZoomIcon kind="out" /></IconButton>
            <IconButton $w={24} aria-label="Zoom avant"><ZoomIcon kind="in" /></IconButton>
          </Tools>
        </Footer>
      </Window>
    </>
  );
}
